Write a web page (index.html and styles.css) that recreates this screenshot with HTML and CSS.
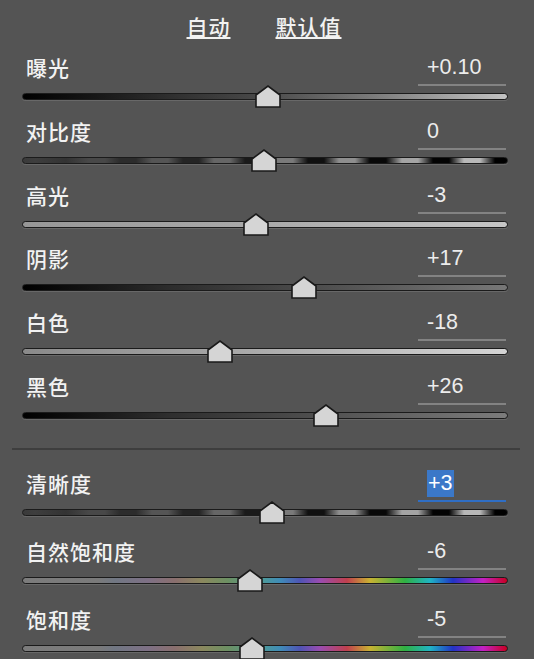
FILE: index.html
```html
<!DOCTYPE html>
<html lang="zh-CN">
<head>
<meta charset="utf-8">
<title>基本</title>
<link rel="stylesheet" href="styles.css">
</head>
<body>
<div class="panel">
  <div class="toolbar">
    <span class="link">自动</span>
    <span class="link">默认值</span>
  </div>

  <div class="group">
    <div class="row">
      <div class="head"><span class="label">曝光</span><span class="value">+0.10</span></div>
      <div class="track track-exposure"><span class="thumb" style="left:50.72%"><svg viewBox="0 0 26 23" width="26" height="23"><polygon points="1,10 13,1 25,10 25,22 1,22" /></svg></span></div>
    </div>
    <div class="row">
      <div class="head"><span class="label">对比度</span><span class="value">0</span></div>
      <div class="track track-contrast"><span class="thumb" style="left:49.79%"><svg viewBox="0 0 26 23" width="26" height="23"><polygon points="1,10 13,1 25,10 25,22 1,22" /></svg></span></div>
    </div>
    <div class="row">
      <div class="head"><span class="label">高光</span><span class="value">-3</span></div>
      <div class="track track-highlights"><span class="thumb" style="left:48.15%"><svg viewBox="0 0 26 23" width="26" height="23"><polygon points="1,10 13,1 25,10 25,22 1,22" /></svg></span></div>
    </div>
    <div class="row">
      <div class="head"><span class="label">阴影</span><span class="value">+17</span></div>
      <div class="track track-shadows"><span class="thumb" style="left:58.02%"><svg viewBox="0 0 26 23" width="26" height="23"><polygon points="1,10 13,1 25,10 25,22 1,22" /></svg></span></div>
    </div>
    <div class="row">
      <div class="head"><span class="label">白色</span><span class="value">-18</span></div>
      <div class="track track-whites"><span class="thumb" style="left:40.74%"><svg viewBox="0 0 26 23" width="26" height="23"><polygon points="1,10 13,1 25,10 25,22 1,22" /></svg></span></div>
    </div>
    <div class="row">
      <div class="head"><span class="label">黑色</span><span class="value">+26</span></div>
      <div class="track track-blacks"><span class="thumb" style="left:62.55%"><svg viewBox="0 0 26 23" width="26" height="23"><polygon points="1,10 13,1 25,10 25,22 1,22" /></svg></span></div>
    </div>
  </div>

  <div class="divider"></div>

  <div class="group group-presence">
    <div class="row">
      <div class="head"><span class="label">清晰度</span><span class="value value-active"><span class="selected">+3</span></span></div>
      <div class="track track-contrast"><span class="thumb" style="left:51.54%"><svg viewBox="0 0 26 23" width="26" height="23"><polygon points="1,10 13,1 25,10 25,22 1,22" /></svg></span></div>
    </div>
    <div class="row">
      <div class="head"><span class="label">自然饱和度</span><span class="value">-6</span></div>
      <div class="track track-saturation"><span class="thumb" style="left:46.91%"><svg viewBox="0 0 26 23" width="26" height="23"><polygon points="1,10 13,1 25,10 25,22 1,22" /></svg></span></div>
    </div>
    <div class="row">
      <div class="head"><span class="label">饱和度</span><span class="value">-5</span></div>
      <div class="track track-saturation"><span class="thumb" style="left:47.33%"><svg viewBox="0 0 26 23" width="26" height="23"><polygon points="1,10 13,1 25,10 25,22 1,22" /></svg></span></div>
    </div>
  </div>
</div>
</body>
</html>
```

FILE: styles.css
```css
html, body {
  margin: 0;
  padding: 0;
  background: #545454;
}

body {
  width: 534px;
  height: 659px;
  overflow: hidden;
  font-family: "Noto Sans CJK SC", "Liberation Sans", sans-serif;
  color: #f0f0f0;
}

.panel {
  width: 534px;
}

.toolbar {
  height: 54px;
  box-sizing: border-box;
  padding: 13px 6px 0 0;
  display: flex;
  justify-content: center;
  gap: 45px;
}

.link {
  font-size: 21px;
  font-weight: 500;
  line-height: 26px;
  letter-spacing: 1px;
  color: #f2f2f2;
  text-decoration: underline;
  text-decoration-thickness: 1.5px;
  text-underline-offset: 2px;
}

.row {
  height: 63.8px;
  box-sizing: border-box;
}

.group-presence .row {
  height: 68px;
}

.head {
  display: flex;
  justify-content: space-between;
  align-items: flex-start;
  height: 32px;
  padding: 0 28px 0 26px;
}

.label {
  font-family: "Noto Sans CJK SC", sans-serif;
  font-size: 21px;
  font-weight: 500;
  line-height: 26px;
  letter-spacing: 1px;
  color: #f2f2f2;
}

.value {
  width: 88px;
  height: 32px;
  box-sizing: border-box;
  padding: 0 0 4px 9px;
  border-bottom: 2px solid #838383;
  font-family: "Liberation Sans", sans-serif;
  font-size: 21.5px;
  line-height: 26px;
  color: #ececec;
}

.value-active {
  border-bottom-color: #2f6ec4;
}

.selected {
  display: inline-block;
  background: #3b78c8;
  color: #ffffff;
  line-height: 27px;
  margin-top: -2px;
  padding: 0 1px;
}

.track {
  position: relative;
  margin: 7px 26px 0 22px;
  height: 7px;
  box-sizing: border-box;
  border: 1px solid #1b1b1b;
  border-radius: 4px;
  box-shadow: 0 1px 0 rgba(255, 255, 255, 0.12);
}

.thumb {
  position: absolute;
  top: -9px;
  width: 26px;
  height: 23px;
  margin-left: -13px;
}

.thumb svg {
  display: block;
}

.thumb polygon {
  fill: #d5d5d5;
  stroke: #1a1a1a;
  stroke-width: 1.6;
  stroke-linejoin: miter;
}

.track-exposure {
  background: linear-gradient(90deg, #000000 0%, #2e2e2e 30%, #4a4a4a 50%, #7a7a7a 72%, #c2c2c2 100%);
}

.track-highlights {
  background: linear-gradient(90deg, #979797 0%, #aaaaaa 50%, #c6c6c6 100%);
}

.track-shadows {
  background: linear-gradient(90deg, #000000 0%, #2c2c2c 30%, #474747 55%, #777777 100%);
}

.track-whites {
  background: linear-gradient(90deg, #8a8a8a 0%, #acacac 50%, #d4d4d4 100%);
}

.track-blacks {
  background: linear-gradient(90deg, #000000 0%, #2e2e2e 30%, #4c4c4c 58%, #7c7c7c 100%);
}

.track-contrast {
  background: linear-gradient(90deg,
    #3a3a3a 0px,
    #3e3e3e 12px,
    #333333 43px,
    #484848 66px, #484848 82px,
    #2c2c2c 97px, #2c2c2c 113px,
    #555555 129px, #555555 145px,
    #242424 160px, #242424 176px,
    #666666 191px, #666666 207px,
    #1a1a1a 222px, #1a1a1a 238px,
    #7a7a7a 254px, #7a7a7a 270px,
    #101010 285px, #101010 301px,
    #8e8e8e 316px, #8e8e8e 332px,
    #080808 347px, #080808 363px,
    #a4a4a4 379px, #a4a4a4 395px,
    #030303 410px, #030303 426px,
    #b8b8b8 441px, #b8b8b8 457px,
    #000000 472px, #000000 484px);
}

.track-saturation {
  background: linear-gradient(90deg,
    #7c7c7c 0px,
    #7a7a7a 75px,
    #717783 92px,
    #7e7085 125px,
    #8a6f6e 152px,
    #8b885e 179px,
    #6c9063 205px,
    #4e9a98 239px,
    #3f8cb8 257px,
    #4f54b4 277px,
    #9a4cb0 297px,
    #c0404e 324px,
    #c8b232 347px,
    #2fb043 382px,
    #20b4c4 407px,
    #2233c4 430px,
    #c321c4 460px,
    #c80022 484px);
}

.divider {
  height: 2px;
  margin: 11px 14px 20px 12px;
  background: #3e3e3e;
}
```
